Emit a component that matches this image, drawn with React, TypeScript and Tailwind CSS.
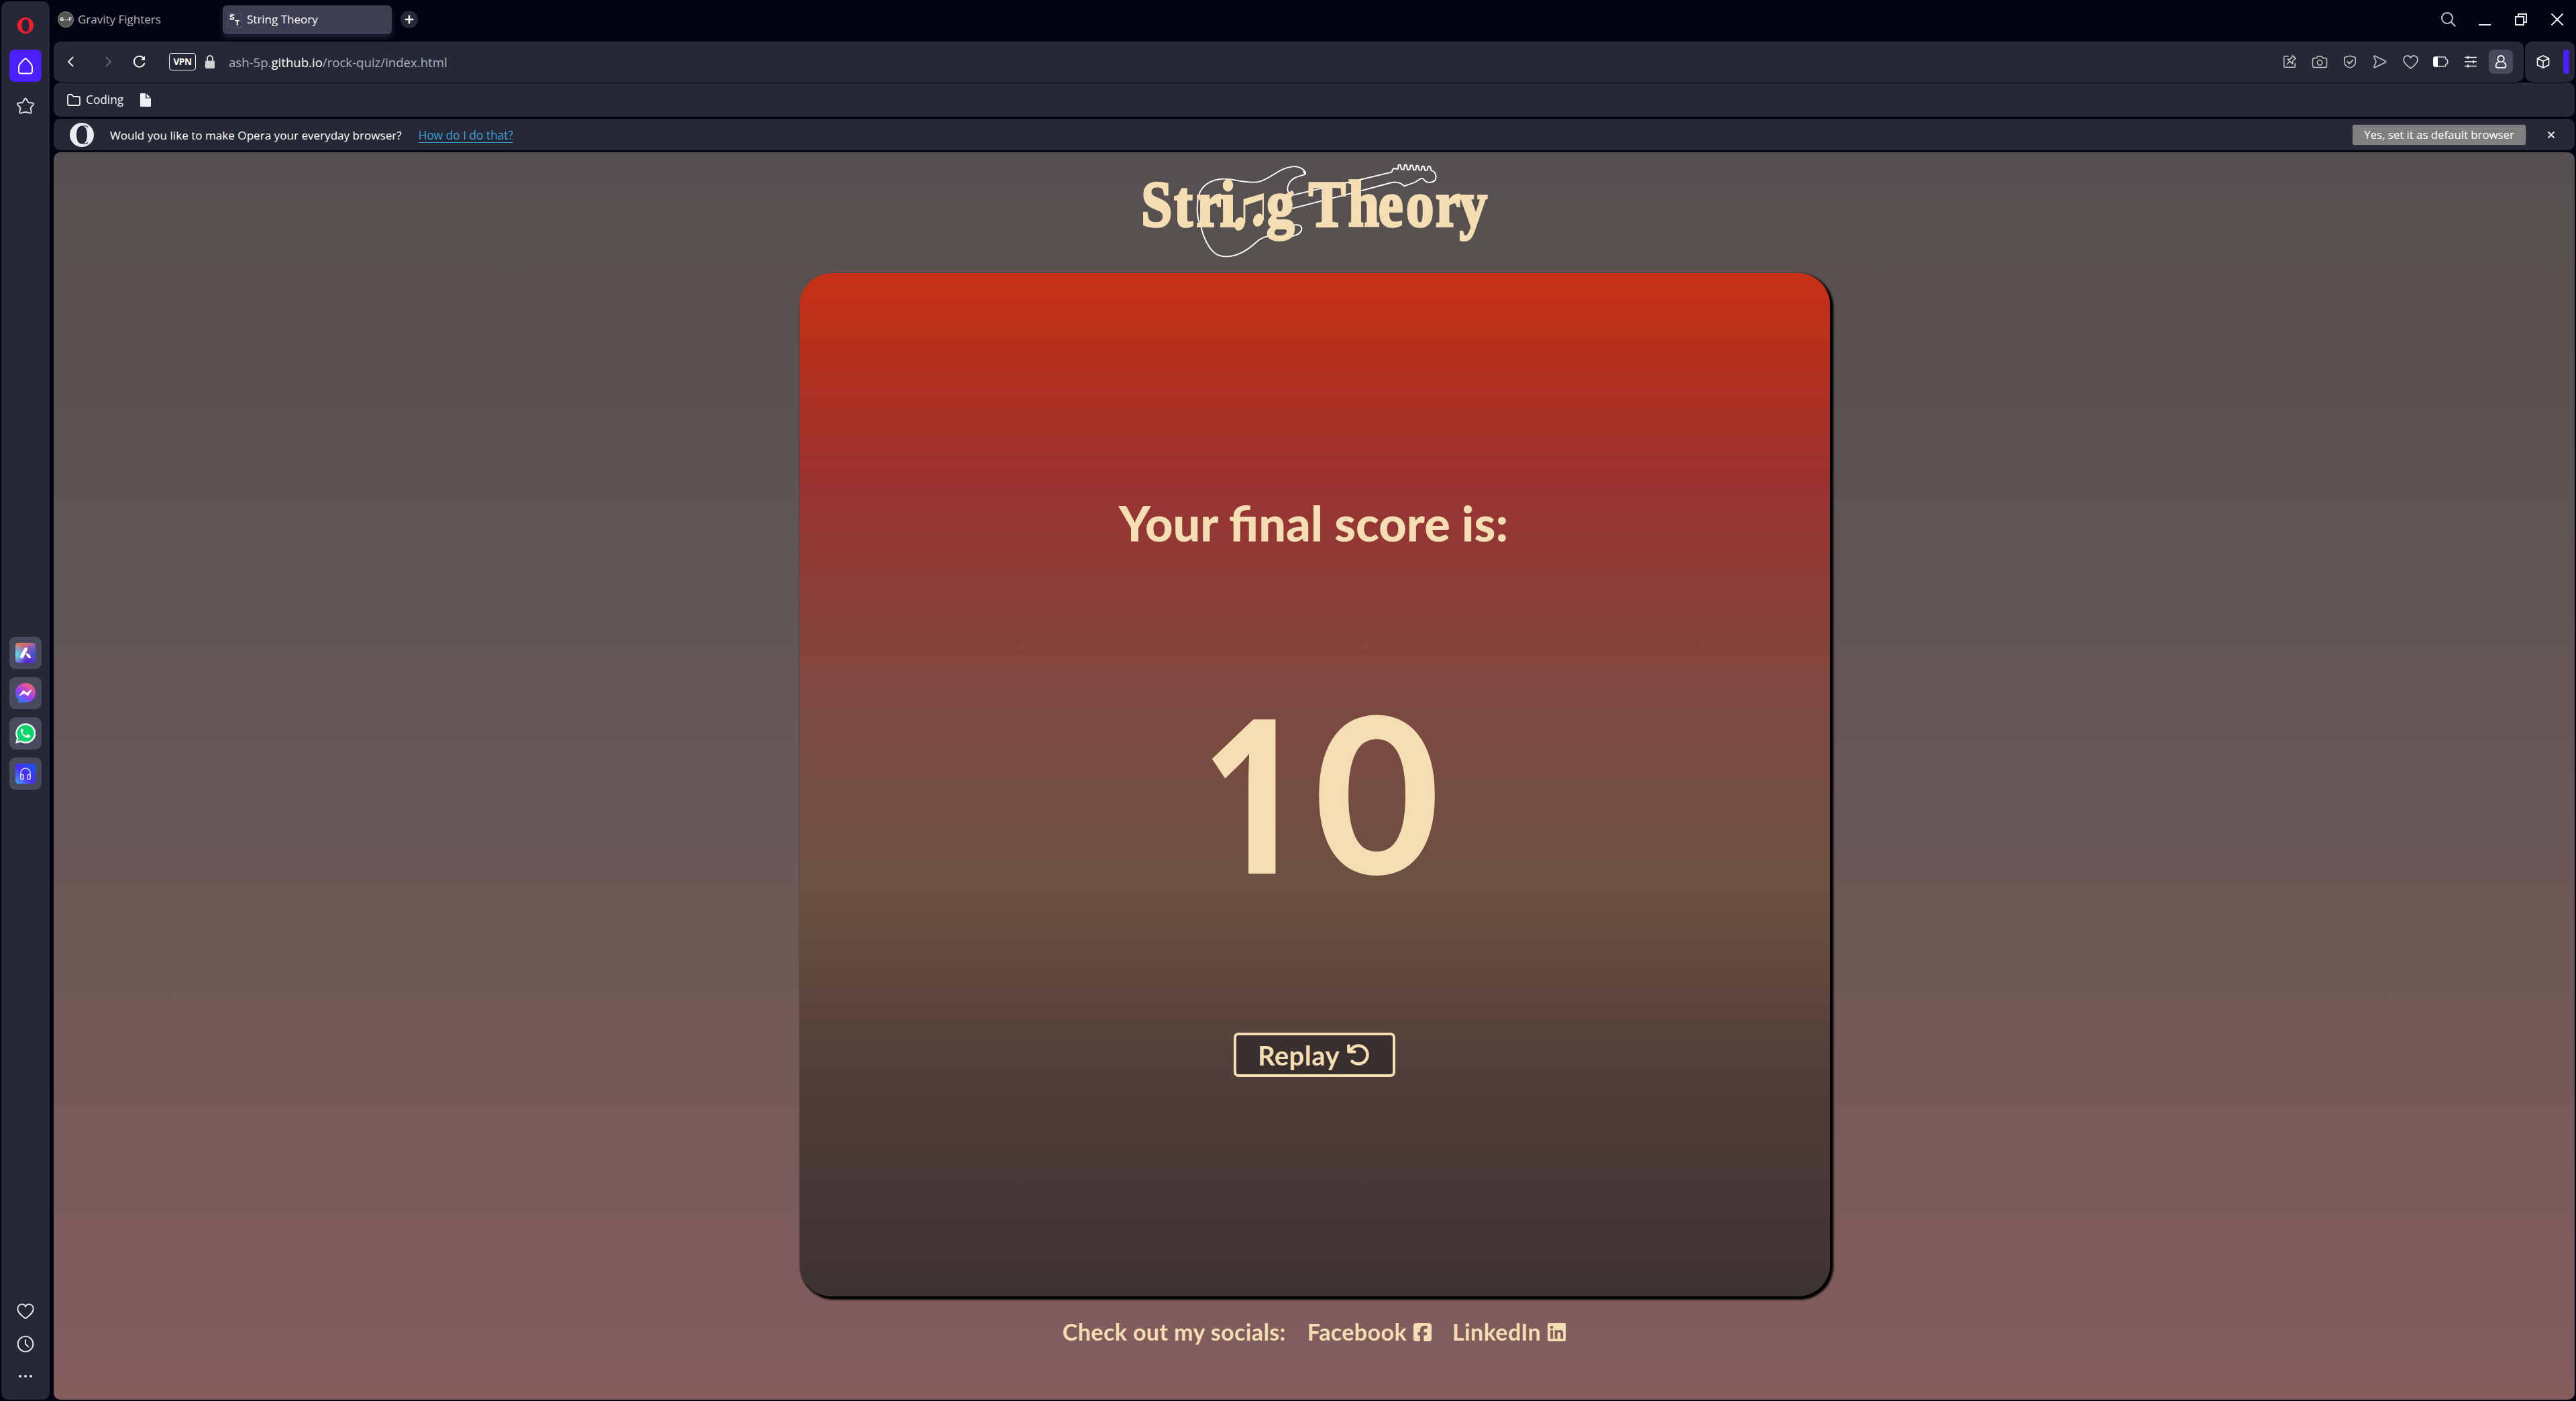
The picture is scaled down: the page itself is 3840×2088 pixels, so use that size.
import React from 'react';
import { FaArrowRotateLeft, FaSquareFacebook, FaLinkedin } from 'react-icons/fa6';

type IconProps = { className?: string; size?: number; children: React.ReactNode; sw?: number };

function Ico({ className = '', size = 24, sw = 1.6, children }: IconProps) {
  return (
    <svg
      width={size}
      height={size}
      viewBox="0 0 24 24"
      fill="none"
      stroke="currentColor"
      strokeWidth={sw}
      strokeLinecap="round"
      strokeLinejoin="round"
      className={`shrink-0 ${className}`}
    >
      {children}
    </svg>
  );
}

function OperaMark({ size, className = '', thick = false }: { size: number; className?: string; thick?: boolean }) {
  return (
    <svg width={size} height={size} viewBox="0 0 36 36" className={`shrink-0 ${className}`} fill="currentColor" fillRule="evenodd">
      <path
        d={
          thick
            ? 'M18 0a18 18 0 1 0 0 36a18 18 0 1 0 0-36ZM18 4.5c5.5 0 8 6.500 8 13.500s-2.500 13.500-8 13.500s-8-6.500-8-13.500s2.500-13.500 8-13.500Z'
            : 'M18 0a18 18 0 1 0 0 36a18 18 0 1 0 0-36ZM18 4.500c5.600 0 8.500 6 8.500 13.500s-2.900 13.500-8.500 13.500s-8.500-6-8.500-13.500s2.900-13.500 8.500-13.500Z'
        }
      />
      <path d="M19 5.500c3-1.500 6-1 8 1M19 30.500c3 1.500 6 1 8-1" fill="none" stroke="#262935" strokeWidth="1.2" />
    </svg>
  );
}

function AppTile({ children }: { children: React.ReactNode }) {
  return <div className="flex h-12 w-12 items-center justify-center rounded-[9px] bg-[#484b60]">{children}</div>;
}

function Sidebar() {
  return (
    <aside className="mt-[2px] ml-[2px] flex h-[2084px] w-[72px] shrink-0 flex-col items-center rounded-[10px] bg-[#262935] text-[#e2e5ea]">
      <OperaMark size={24} className="mt-6 text-[#ff1b2d]" />
      <div className="mt-6 flex h-12 w-12 items-center justify-center rounded-lg bg-[#4c1fff] text-white">
        <svg width="24" height="26" viewBox="0 0 24 26" fill="none" stroke="currentColor" strokeWidth="2" strokeLinejoin="round">
          <path d="M12 2c.8 0 7.500 7 9 9.500.7 1.300 1 2.500 1 4V21c0 2.500-.8 3.500-3 3.500H5c-2.200 0-3-1-3-3.500v-5.500c0-1.500.3-2.700 1-4C4.500 9 11.200 2 12 2Z" />
        </svg>
      </div>
      <svg width="28" height="28" viewBox="0 0 28 28" fill="none" stroke="currentColor" strokeWidth="1.900" strokeLinejoin="round" className="mt-[22px]">
        <path d="M14 2.500c1.300 0 3 5.200 4.500 6.200 1.500.9 7.200.3 7.700 1.900.5 1.600-4 4.300-4.500 6.100-.4 1.700 1.900 6.800.6 7.800-1.400 1-5.500-1.500-8.300-1.500s-6.900 2.500-8.300 1.500c-1.300-1 1-6.100.6-7.800-.5-1.800-5-4.500-4.500-6.100.5-1.600 6.200-1 7.700-1.900 1.500-1 3.200-6.200 4.500-6.200Z" />
      </svg>
      <div className="mt-[777px] flex flex-col gap-3">
        <AppTile>
          <svg width="30" height="30" viewBox="0 0 30 30">
            <defs>
              <linearGradient id="aria1" x1="0" y1="0" x2="0.4" y2="1">
                <stop offset="0" stopColor="#ff7336" />
                <stop offset="0.45" stopColor="#a05fb0" />
                <stop offset="1" stopColor="#5a1fd0" />
              </linearGradient>
              <radialGradient id="aria2" cx="0" cy="0.6" r="0.6">
                <stop offset="0" stopColor="#5fe6f0" />
                <stop offset="1" stopColor="#5fe6f0" stopOpacity="0" />
              </radialGradient>
              <radialGradient id="aria3" cx="1" cy="0.6" r="0.6">
                <stop offset="0" stopColor="#3f5ad0" />
                <stop offset="1" stopColor="#3f5ad0" stopOpacity="0" />
              </radialGradient>
            </defs>
            <rect width="30" height="30" rx="4.500" fill="url(#aria1)" />
            <rect width="30" height="30" rx="4.500" fill="url(#aria2)" />
            <rect width="30" height="30" rx="4.500" fill="url(#aria3)" />
            <path d="M15.500 9.500 9.500 20.500" stroke="#fff" strokeWidth="5" strokeLinecap="round" />
            <path d="M16 15.500c4 0 7 3.500 7 7.500-4 .5-7-3-7-7.500Z" fill="#fff" />
          </svg>
        </AppTile>
        <AppTile>
          <svg width="30" height="30" viewBox="0 0 30 30">
            <defs>
              <linearGradient id="msg" x1="0.15" y1="1" x2="0.75" y2="0">
                <stop offset="0" stopColor="#0a8cff" />
                <stop offset="0.45" stopColor="#9b3cf5" />
                <stop offset="1" stopColor="#ff6270" />
              </linearGradient>
            </defs>
            <path d="M15 0C6.500 0 0 6.200 0 14.500c0 4.500 1.800 8.100 4.800 10.800L5.200 30l5.300-1.500c1.400.4 2.900.6 4.500.6 8.500 0 15-6.200 15-14.600S23.500 0 15 0Z" fill="url(#msg)" />
            <path d="m6 19 6-8 5 4 7-5-5.500 9-5.500-4Z" fill="#fff" stroke="#fff" strokeWidth="1" strokeLinejoin="round" />
          </svg>
        </AppTile>
        <AppTile>
          <svg width="30" height="30" viewBox="0 0 30 30">
            <path d="M15 0a15 15 0 0 0-13 22.300L0 30l7.900-2A15 15 0 1 0 15 0Z" fill="#f2f4f4" />
            <path d="M15 2.500a12.500 12.500 0 0 0-10.500 19.200L3.300 26.600l5-1.200A12.500 12.500 0 1 0 15 2.500Z" fill="#08d46c" />
            <path d="M10.800 8.200c-.5-.8-1.300-.7-2 .1-1.700 1.900-1.200 4.400.2 6.600 2.200 3.500 5.200 6 9 6.800 1.900.3 3.700-.6 4.200-2.300.2-.9.100-1.300-.5-1.600l-2.800-1.400c-.6-.3-1-.2-1.400.4l-1 1.300c-.4.500-.8.500-1.400.2-2-.9-3.500-2.300-4.600-4.200-.3-.5-.2-.9.200-1.300l.8-1c.3-.4.300-.8.100-1.200Z" fill="#f2f4f4" />
          </svg>
        </AppTile>
        <AppTile>
          <svg width="30" height="30" viewBox="0 0 30 30">
            <defs>
              <linearGradient id="player" x1="0" y1="1" x2="1" y2="0">
                <stop offset="0" stopColor="#4aa8ff" />
                <stop offset="0.45" stopColor="#4a2cf0" />
                <stop offset="1" stopColor="#1458f5" />
              </linearGradient>
            </defs>
            <rect width="30" height="30" rx="4.500" fill="url(#player)" />
            <g fill="none" stroke="#dfe0ff" strokeWidth="1.500">
              <path d="M8 19v-5a7 7 0 0 1 14 0v5" />
              <rect x="7.800" y="16.200" width="4.200" height="7.300" rx="2" />
              <rect x="18" y="16.200" width="4.200" height="7.300" rx="2" />
            </g>
          </svg>
        </AppTile>
      </div>
      <div className="mt-[763px] flex flex-col items-center gap-[22px]">
        <Ico size={28} sw={1.600}>
          <path d="M12 21.500C8 18.500 2 14.500 2 9.300c0-6 7.500-8.600 10-2.800 2.500-5.800 10-3.200 10 2.800 0 5.200-6 9.200-10 12.200Z" />
        </Ico>
        <Ico size={26} sw={1.800}>
          <circle cx="12" cy="12" r="10.500" />
          <path d="M12 6.500V12l4 4" />
        </Ico>
        <div className="mt-[11px] flex gap-1">
          <i className="h-1 w-1 rounded-full bg-[#e2e5ea]" />
          <i className="h-1 w-1 rounded-full bg-[#e2e5ea]" />
          <i className="h-1 w-1 rounded-full bg-[#e2e5ea]" />
        </div>
      </div>
    </aside>
  );
}

function TabStrip() {
  return (
    <div className="flex h-[62px] shrink-0 items-start justify-between">
      <div className="flex pt-2">
        <div className="flex h-[42px] w-[252px] items-center gap-[6px] pl-[6px] text-[17px] text-[#b4b5bd]">
          <div className="flex h-6 w-6 items-center justify-center rounded-full border border-[#8b8b8b] bg-[#555] font-['Roboto'] text-[8px] font-black tracking-[-0.3px] text-white">
            G↔F
          </div>
          <span>Gravity Fighters</span>
        </div>
        <div className="flex h-[42px] w-[252px] items-center gap-[6px] rounded-md border-b border-[#55587a] bg-[#3b3d53] pl-[6px] text-[17px] text-white shadow-[0_6px_10px_rgba(70,72,100,0.45)]">
          <svg width="24" height="26" viewBox="0 0 24 26" className="shrink-0">
            <path d="M3 2c3 2 4 3 6 3h6c2 0 4-2 6-2 2 2 0 6 0 9 0 4 3 6 2 10-1 3-6 3-11 3S2 25 1 22c-1-4 2-6 2-10S1 5 3 2Z" fill="none" stroke="#55576b" strokeWidth="1" />
            <text x="4" y="14" fontFamily="Roboto" fontWeight="900" fontSize="12" fill="#fff">S</text>
            <text x="12.500" y="22" fontFamily="Roboto" fontWeight="900" fontSize="10" fill="#fff">T</text>
          </svg>
          <span>String Theory</span>
        </div>
        <div className="mt-2 ml-[13px] flex h-[26px] w-[26px] items-center justify-center rounded-full bg-[#262935] text-white">
          <Ico size={16} sw={3.600}>
            <path d="M12 4v16M4 12h16" />
          </Ico>
        </div>
      </div>
      <div className="flex items-center gap-9 pt-[18px] pr-[17px] text-[#e6e9ee]">
        <svg width="22" height="22" viewBox="0 0 22 22" fill="none" stroke="#c3c6cc" strokeWidth="2" className="mr-[-2px]">
          <circle cx="9" cy="9" r="8" />
          <path d="m14.800 14.800 6.500 6.500" />
        </svg>
        <svg width="18" height="18" viewBox="0 0 18 18" className="overflow-visible">
          <path d="M0 17h18" stroke="currentColor" strokeWidth="2" />
        </svg>
        <svg width="18" height="18" viewBox="0 0 18 18" fill="none" stroke="currentColor" strokeWidth="2">
          <path d="M1 5h12v12H1ZM5 5V1h12v12h-4" />
        </svg>
        <svg width="18" height="18" viewBox="0 0 18 18" fill="none" stroke="currentColor" strokeWidth="2">
          <path d="m.5.5 17 17M17.500.5l-17 17" />
        </svg>
      </div>
    </div>
  );
}

function ToolButton({ children, active = false }: { children: React.ReactNode; active?: boolean }) {
  return (
    <div className={active ? 'flex h-9 w-9 items-center justify-center rounded-lg bg-[#484b60] text-white' : 'flex h-9 w-9 items-center justify-center text-[#c5c8cc]'}>
      {children}
    </div>
  );
}

function AddressBar() {
  return (
    <div className="flex h-[60px] shrink-0 gap-[2px]">
      <div className="flex flex-1 items-center rounded-[10px] bg-[#262935] pr-4">
        <svg width="10" height="16" viewBox="0 0 10 16" fill="none" stroke="#f2f3f5" strokeWidth="1.800" className="ml-[20px]">
          <path d="M9 1 2 8l7 7" />
        </svg>
        <svg width="10" height="16" viewBox="0 0 10 16" fill="none" stroke="#62656f" strokeWidth="1.800" className="ml-[47px]">
          <path d="m1 1 7 7-7 7" />
        </svg>
        <svg width="20" height="20" viewBox="0 0 20 20" fill="none" stroke="#f2f3f5" strokeWidth="2" className="ml-[31px]">
          <path d="M17.500 12a8 8 0 1 1-1-6.800" />
          <path d="M18 1.500v6h-6Z" fill="#f2f3f5" stroke="none" />
        </svg>
        <div className="ml-[34px] flex h-[26px] w-10 items-center justify-center rounded-[4px] border border-[#f2f3f5] text-[13.500px] font-bold tracking-[-0.4px] text-white">VPN</div>
        <svg width="14" height="20" viewBox="0 0 14 20" className="ml-[14px]">
          <rect y="8.500" width="14" height="11.500" rx="1.500" fill="#d0d2d2" />
          <path d="M3 9V5a4 4 0 0 1 8 0v4" fill="none" stroke="#d0d2d2" strokeWidth="2" />
        </svg>
        <div className="ml-[21px] flex-1 pt-[2px] text-[18.600px] text-[#a9b2c3]">
          ash-5p.<span className="text-white">github.io</span>/rock-quiz/index.html
        </div>
        <div className="flex gap-[9px]">
          <ToolButton>
            <Ico size={22} sw={1.700}>
              <path d="M10 3H4C3 3 3 3 3 5v14c0 2 0 2 2 2h14c2 0 2 0 2-2v-4" />
              <path d="m17 2 5 5-2 1-3 3.500v4L9 8h4l3-3.500ZM12.500 11.500 8 16" />
            </Ico>
          </ToolButton>
          <ToolButton>
            <Ico size={24} sw={1.500}>
              <path d="M4 6.500h3.500L9 4h6l1.500 2.500H20c1.800 0 2.500 1 2.500 2.500v9c0 1.800-.8 2.500-2.500 2.500H4c-1.700 0-2.500-.7-2.500-2.500V9C1.500 7.500 2.200 6.500 4 6.500Z" />
              <circle cx="12" cy="13.300" r="3.700" />
            </Ico>
          </ToolButton>
          <ToolButton>
            <Ico size={22} sw={1.600}>
              <path d="M12 2.500 21 5v8c0 4-4 7-9 9-5-2-9-5-9-9V5Z" />
              <path d="m8 12 3 3 5.500-5.500" strokeWidth="2" />
            </Ico>
          </ToolButton>
          <ToolButton>
            <Ico size={22} sw={1.800}>
              <path d="M4 2.800c4.500 2.200 10.500 5.200 16 7.800 1.700.8 1.700 2 0 2.800-5.500 2.600-11.500 5.600-16 7.800-2 .9-2.200-.3-1.700-1.800L5.500 12 2.300 4.600C1.800 3.100 2 1.900 4 2.800Z" />
            </Ico>
          </ToolButton>
          <ToolButton>
            <Ico size={25} sw={1.600}>
              <path d="M12 21C8 18 2 14 2 8.800c0-6 7.500-8.100 10-2.800 2.500-5.300 10-3.200 10 2.800C22 14 16 18 12 21Z" />
            </Ico>
          </ToolButton>
          <ToolButton>
            <svg width="22" height="16" viewBox="0 0 22 16" className="overflow-visible" fill="none" stroke="#d0d2d6" strokeWidth="1.600">
              <path d="M3 1h15l1 3 2.500 1.500v5L19 12l-1 3H3Q.8 15 .8 13V3Q.8 1 3 1Z" />
              <path d="M2.500.5H7v15H2.500Q.5 15.500.5 13V3Q.5.5 2.500.5Z" fill="#fff" stroke="none" />
            </svg>
          </ToolButton>
          <ToolButton>
            <svg width="18" height="18" viewBox="0 0 18 18" fill="none" stroke="#fff" strokeWidth="1.600">
              <path d="M0 2.500h18M0 9h18M0 15.500h18M5 .3v4.400M13 6.800v4.400M5 13.300v4.400" />
            </svg>
          </ToolButton>
          <ToolButton active>
            <svg width="18" height="20" viewBox="0 0 18 20" fill="none" stroke="#fff" strokeWidth="1.800">
              <circle cx="9" cy="5.700" r="4.700" />
              <path d="M5.500 10.500C3 11.500 1.500 14 1.500 16.300c0 1.700.8 2.500 2.500 2.500h10c1.700 0 2.500-.8 2.500-2.500 0-2.300-1.500-4.800-4-5.800" />
            </svg>
          </ToolButton>
        </div>
      </div>
      <div className="flex w-[74px] items-center rounded-[10px] bg-[#262935] pl-[17px]">
        <svg width="20" height="20" viewBox="0 0 20 20" fill="none" stroke="#fff" strokeWidth="1.600" strokeLinejoin="round">
          <path d="m10 1 8.500 4v10L10 19l-8.500-4V5ZM1.500 5l8.500 4.300L18.500 5M10 9.300V19" />
        </svg>
        <div className="ml-[20px] h-9 w-[9px] rounded-[4px] bg-[#4c1fff]" />
      </div>
    </div>
  );
}

function BookmarksBar() {
  return (
    <div className="mt-px flex h-[51px] shrink-0 items-center rounded-[10px] bg-[#262935] pl-5 text-[17.300px] text-[#eef1f4]">
      <svg width="20" height="18" viewBox="0 0 20 18" fill="none" stroke="currentColor" strokeWidth="1.800" strokeLinejoin="round">
        <path d="M1 3q0-2 2-2h4l2.500 3H17q2 0 2 2v9q0 2-2 2H3q-2 0-2-2Z" />
      </svg>
      <span className="ml-2 pt-px">Coding</span>
      <svg width="16" height="20" viewBox="0 0 16 20" fill="currentColor" className="ml-[25px]">
        <path d="M1 0h7v7.500h8V19q0 1-1 1H1q-1 0-1-1V1q0-1 1-1Z" />
        <path d="M9.500.5 15.500 6.500h-6Z" />
      </svg>
    </div>
  );
}

function DefaultBrowserNotice() {
  return (
    <div className="mt-[3px] flex h-[47px] shrink-0 items-center rounded-[10px] bg-[#262935] pr-[30px] pl-6 text-[17.100px] text-white">
      <OperaMark size={36} thick className="text-[#e8edf1]" />
      <span className="ml-6 pt-[3px]">Would you like to make Opera your everyday browser?</span>
      <span className="ml-[25px] pt-[3px] text-[17.300px] text-[#3f9fd6] underline underline-offset-4">How do I do that?</span>
      <div className="ml-auto flex h-[30px] w-[258px] items-center justify-center rounded-[3px] bg-[#7f7f7f] text-[16.800px] shadow-[0_0_2px_#555]">Yes, set it as default browser</div>
      <svg width="10" height="10" viewBox="0 0 10 10" stroke="#e8edf1" strokeWidth="2" className="ml-[33px]">
        <path d="m.5.5 9 9M9.500.5l-9 9" />
      </svg>
    </div>
  );
}

function Logo() {
  return (
    <svg width="560" height="170" viewBox="0 0 1568 510" preserveAspectRatio="none" className="mt-[3px] shrink-0">
      <g fill="none" stroke="#fff" strokeWidth="5.500" strokeLinejoin="round">
        <path d="M745 88C748 74 722 50 690 55C635 62 605 104 556 121C510 134 450 110 405 110C352 111 312 138 300 182C288 232 292 290 308 320C318 368 340 425 375 448C402 461 438 459 472 443C530 416 540 378 582 368C615 360 640 370 668 369C708 366 728 352 729 332C728 312 705 314 690 318" />
        <path d="M735 76L745 88C720 102 696 96 676 130C662 160 674 181 695 182L815 151L970 114L1104 80L1112 63L1131 66L1133 47H1141L1146 68L1156 67L1159 47H1166L1171 69L1180 68L1183 49H1191L1196 70L1205 69L1208 51H1215L1220 71L1229 70L1232 53H1239L1244 72L1253 71L1257 54H1265L1270 73C1287 74 1294 98 1286 116C1272 130 1250 128 1242 116C1230 96 1220 116 1200 126L1157 142C1144 128 1130 121 1105 126L966 166L690 242M656 240C650 255 651 268 654 280" />
      </g>
      <g fill="#f5deb3" stroke="#f5deb3" strokeWidth="11" fontFamily="'Liberation Serif', serif" fontWeight="700" fontSize="290" transform="scale(0.8 1)">
        <text y="321" x="74 246 362 486">Stri</text>
        <text y="321" x="728">g</text>
        <text y="321" x="948 1154 1312 1456 1610 1734">Theory</text>
      </g>
      <g fill="#f5deb3">
        <path d="M486 200 571 174V200L494 228V305H486ZM565 190h6v105h-6Z" />
        <ellipse cx="470" cy="311" rx="21" ry="31" transform="rotate(15 470 311)" />
        <ellipse cx="548" cy="294" rx="21" ry="30" transform="rotate(15 548 294)" />
      </g>
    </svg>
  );
}

function QuizPage() {
  return (
    <main className="mt-[3px] flex h-[1859px] flex-col items-center overflow-hidden rounded-[10px] bg-[linear-gradient(180deg,#555050_0%,#5b5250_20%,#645756_45%,#6c5958_62%,#795a5b_80%,#845d5d_100%)] pl-[2px] font-['Lato',sans-serif] text-[#f5deb3]">
      <Logo />
      <section className="mt-[7px] flex h-[1525px] w-[1536px] shrink-0 flex-col items-center rounded-[48px] bg-[linear-gradient(180deg,#c63016_0%,#b8301b_7%,#9b3230_20%,#7e4941_41.500%,#6b5140_60%,#503d3a_79%,#3e3232_100%)] shadow-[3px_3px_3px_2px_#000]">
        <h1 className="mt-[328px] mr-[4px] h-[88px] text-[72px] leading-[88px] font-black">Your final score is:</h1>
        <div className="mt-[189px] flex h-[328px] items-center leading-[328px] font-bold">
          <span className="mr-[-15px] ml-[16px] origin-left scale-x-[0.83] pt-[2px] font-['Open_Sans'] text-[322px]">1</span>
          <span className="pt-[1px] text-[320px] [-webkit-text-stroke:3px_#f5deb3]">0</span>
        </div>
        <button className="mt-[199px] mr-[2px] flex h-[66px] w-[241px] items-center justify-center gap-[10px] rounded-[7px] border-4 border-[#f5deb3] bg-[#3a2f2f] text-[40px] leading-none font-bold tracking-[0.5px]">
          <span className="pt-[2px]">Replay</span>
          <FaArrowRotateLeft size={36} />
        </button>
      </section>
      <footer className="mt-[32px] flex h-[42px] items-center text-[34px] leading-[42px] font-bold tracking-[0.4px]">
        <span>Check out my socials:</span>
        <a className="ml-8 flex items-center gap-2">
          Facebook
          <FaSquareFacebook size={31} />
        </a>
        <a className="ml-[29px] flex items-center gap-2">
          LinkedIn
          <FaLinkedin size={31} />
        </a>
      </footer>
    </main>
  );
}

export default function App() {
  return (
    <div className="flex h-[2088px] w-[3840px] overflow-hidden bg-[#020412] font-['Open_Sans',sans-serif]">
      <Sidebar />
      <div className="mr-[2px] ml-[6px] flex min-w-0 flex-1 flex-col">
        <TabStrip />
        <AddressBar />
        <BookmarksBar />
        <DefaultBrowserNotice />
        <QuizPage />
      </div>
    </div>
  );
}
